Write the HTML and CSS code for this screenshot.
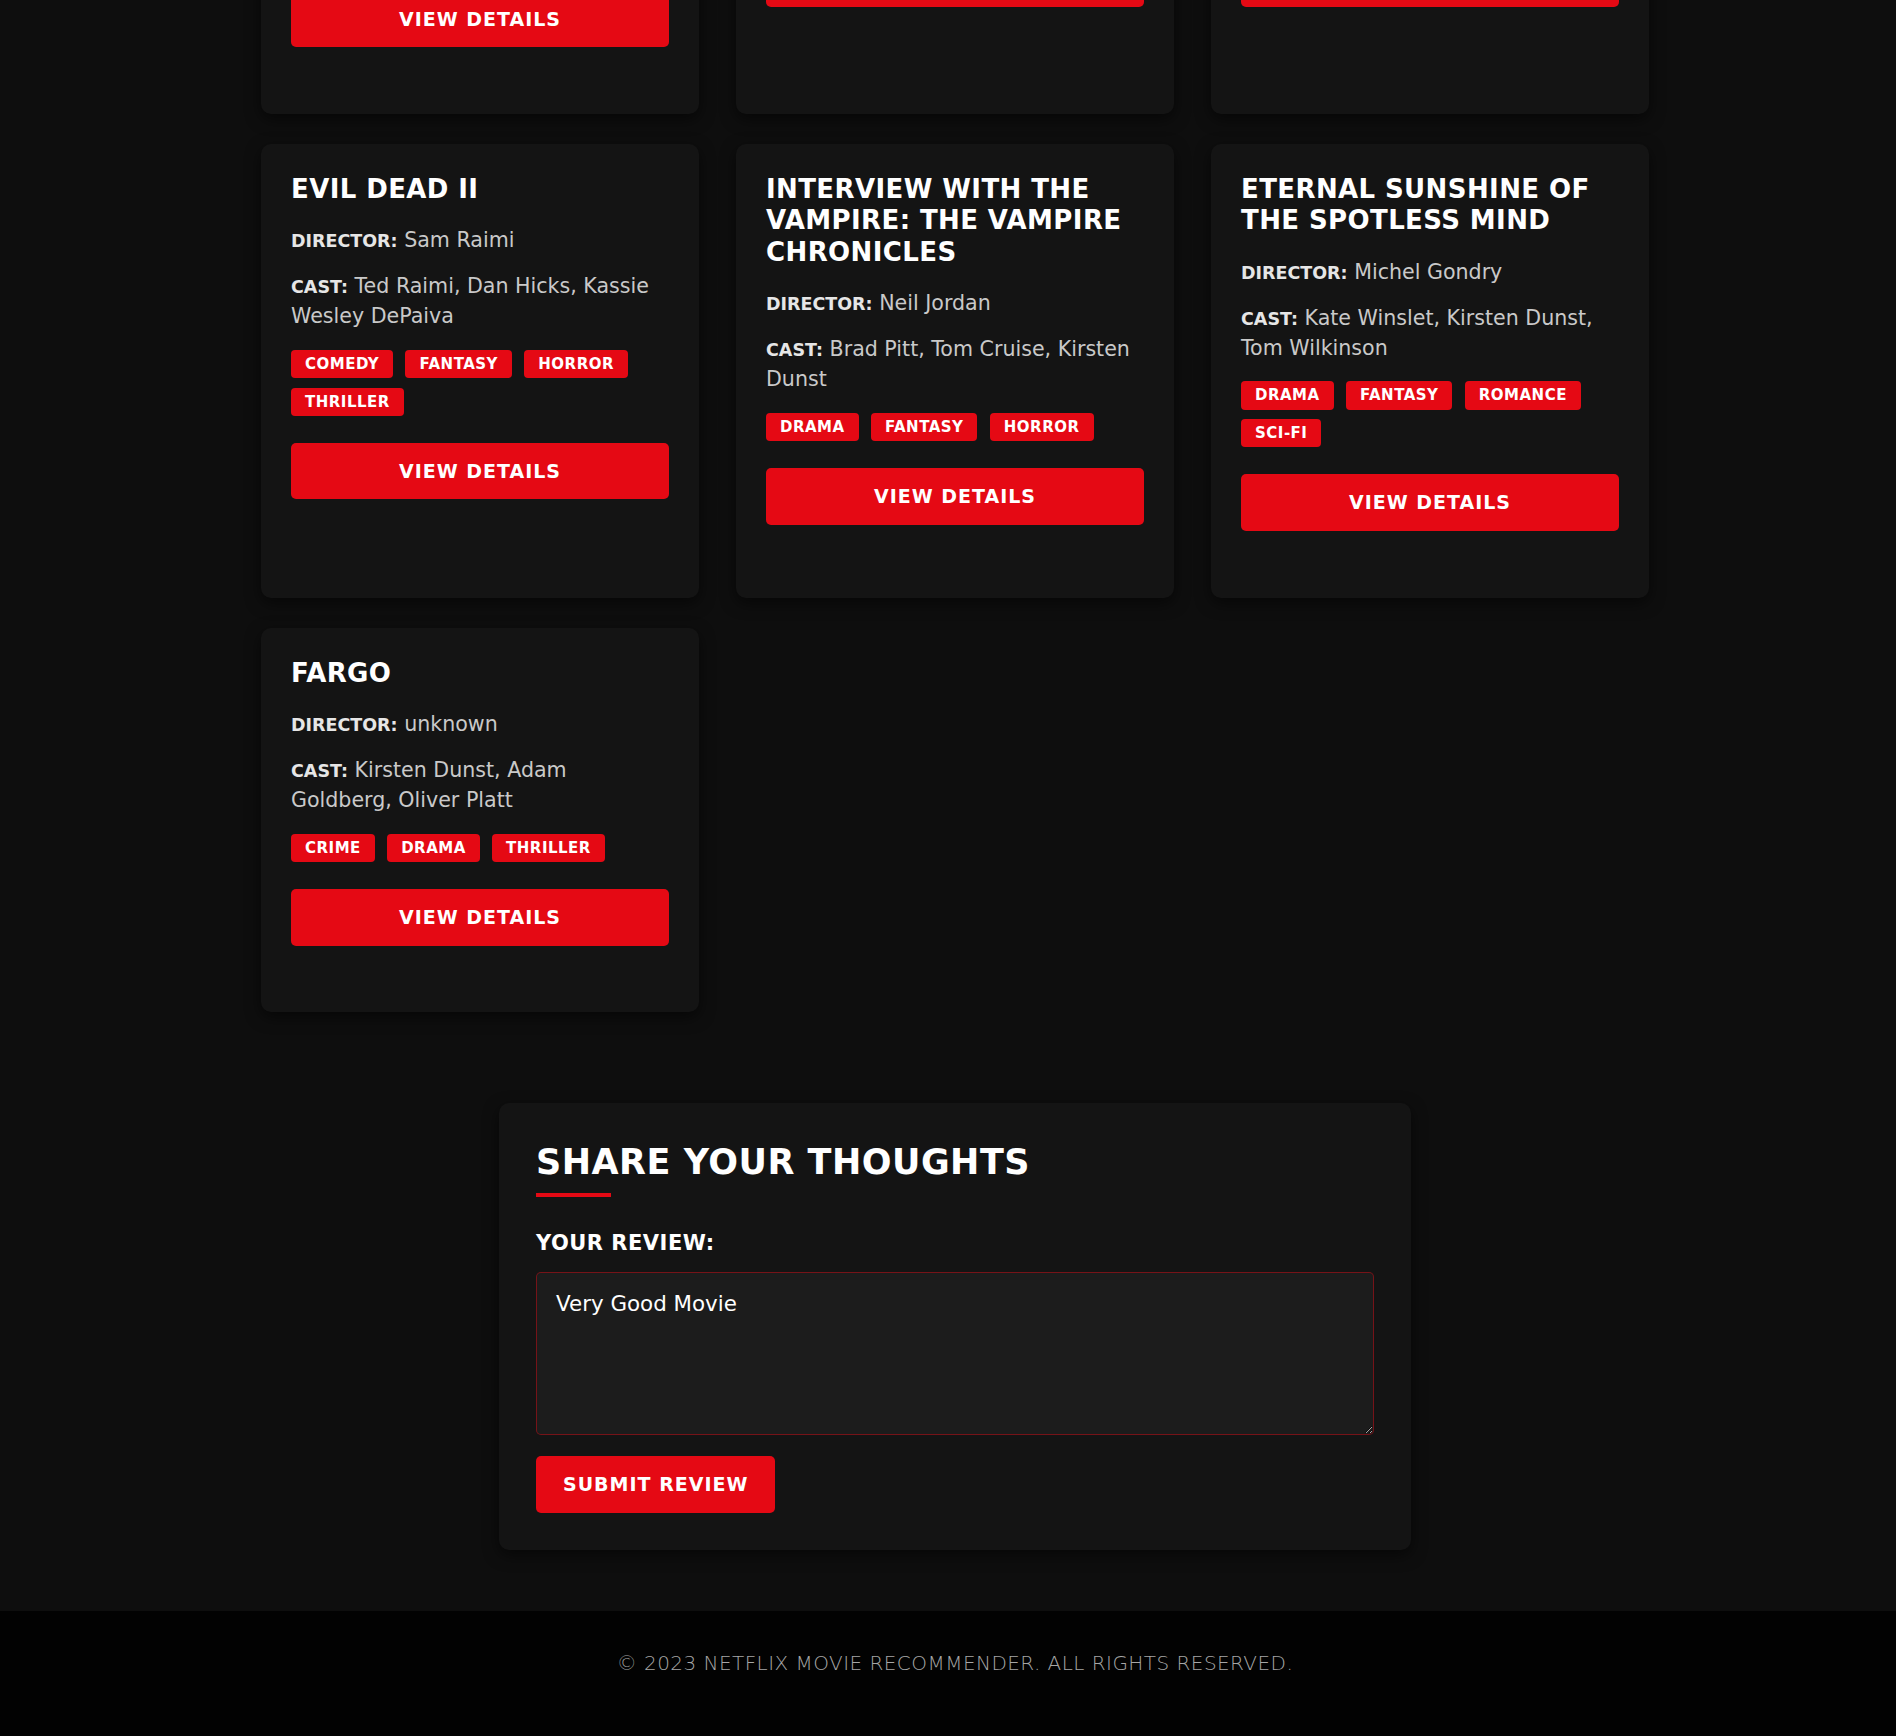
FILE: index.html
```html
<!DOCTYPE html>
<html lang="en">
<head>
<meta charset="utf-8">
<title>Netflix Movie Recommender</title>
<link rel="stylesheet" href="styles.css">
</head>
<body>
<main class="page">
  <section class="movie-grid">
    <article class="card card-cut card-cut-tall">
      <button class="details-btn" type="button">VIEW DETAILS</button>
    </article>
    <article class="card card-cut card-cut-short">
      <button class="details-btn" type="button">VIEW DETAILS</button>
    </article>
    <article class="card card-cut card-cut-short">
      <button class="details-btn" type="button">VIEW DETAILS</button>
    </article>

    <article class="card">
      <h3 class="card-title">EVIL DEAD II</h3>
      <div class="card-meta">
        <p><strong>DIRECTOR:</strong> <span class="meta-value">Sam Raimi</span></p>
        <p><strong>CAST:</strong> <span class="meta-value">Ted Raimi, Dan Hicks, Kassie Wesley DePaiva</span></p>
      </div>
      <div class="genres">
        <span class="genre">COMEDY</span>
        <span class="genre">FANTASY</span>
        <span class="genre">HORROR</span>
        <span class="genre">THRILLER</span>
      </div>
      <button class="details-btn" type="button">VIEW DETAILS</button>
    </article>

    <article class="card">
      <h3 class="card-title">INTERVIEW WITH THE VAMPIRE: THE VAMPIRE CHRONICLES</h3>
      <div class="card-meta">
        <p><strong>DIRECTOR:</strong> <span class="meta-value">Neil Jordan</span></p>
        <p><strong>CAST:</strong> <span class="meta-value">Brad Pitt, Tom Cruise, Kirsten Dunst</span></p>
      </div>
      <div class="genres">
        <span class="genre">DRAMA</span>
        <span class="genre">FANTASY</span>
        <span class="genre">HORROR</span>
      </div>
      <button class="details-btn" type="button">VIEW DETAILS</button>
    </article>

    <article class="card">
      <h3 class="card-title">ETERNAL SUNSHINE OF THE SPOTLESS MIND</h3>
      <div class="card-meta">
        <p><strong>DIRECTOR:</strong> <span class="meta-value">Michel Gondry</span></p>
        <p><strong>CAST:</strong> <span class="meta-value">Kate Winslet, Kirsten Dunst, Tom Wilkinson</span></p>
      </div>
      <div class="genres">
        <span class="genre">DRAMA</span>
        <span class="genre">FANTASY</span>
        <span class="genre">ROMANCE</span>
        <span class="genre">SCI-FI</span>
      </div>
      <button class="details-btn" type="button">VIEW DETAILS</button>
    </article>

    <article class="card">
      <h3 class="card-title">FARGO</h3>
      <div class="card-meta">
        <p><strong>DIRECTOR:</strong> <span class="meta-value">unknown</span></p>
        <p><strong>CAST:</strong> <span class="meta-value">Kirsten Dunst, Adam Goldberg, Oliver Platt</span></p>
      </div>
      <div class="genres">
        <span class="genre">CRIME</span>
        <span class="genre">DRAMA</span>
        <span class="genre">THRILLER</span>
      </div>
      <button class="details-btn" type="button">VIEW DETAILS</button>
    </article>
  </section>

  <section class="review">
    <h2 class="review-title">SHARE YOUR THOUGHTS</h2>
    <form class="review-form">
      <label class="review-label" for="review-text">YOUR REVIEW:</label>
      <textarea class="review-text" id="review-text">Very Good Movie</textarea>
      <button class="submit-btn" type="submit">SUBMIT REVIEW</button>
    </form>
  </section>
</main>

<footer class="site-footer">
  <p class="footer-text">© 2023 NETFLIX MOVIE RECOMMENDER. ALL RIGHTS RESERVED.</p>
</footer>
</body>
</html>
```

FILE: styles.css
```css
html {
  background: #0e0e0e;
}

body {
  margin: 0;
  background: #0e0e0e;
  color: #ffffff;
  font-family: "DejaVu Sans", "Liberation Sans", sans-serif;
}

.page {
  padding-left: 14px;
}

/* ---------- movie grid ---------- */
.movie-grid {
  width: 1388px;
  margin: -80px auto 0;
  display: grid;
  grid-template-columns: repeat(3, 438px);
  column-gap: 37px;
  row-gap: 30.3px;
}

.card {
  background: #141414;
  border-radius: 10px;
  padding: 30px 30px 66.8px;
  box-shadow: 0 5px 15px rgba(0, 0, 0, 0.55);
}

.card-cut-tall {
  padding-top: 70.5px;
}

.card-cut-short {
  padding-top: 30.9px;
}

.card-title {
  margin: 0 0 20px;
  font-size: 26px;
  line-height: 31.4px;
  font-weight: 700;
  letter-spacing: 0.4px;
  color: #ffffff;
}

.card-meta {
  display: flex;
  flex-direction: column;
  gap: 16px;
}

.card-meta p {
  margin: 0;
  font-size: 20.6px;
  line-height: 30px;
  color: #c9c9c9;
}

.card-meta strong {
  font-size: 17.5px;
  line-height: 1;
  font-weight: 700;
  color: #e6e6e6;
}

.meta-value {
  color: #c9c9c9;
}

.genres {
  margin-top: 18.4px;
  display: flex;
  flex-wrap: wrap;
  gap: 9.5px 12.3px;
}

.genre {
  display: inline-block;
  background: #e50914;
  color: #ffffff;
  font-size: 15px;
  font-weight: 700;
  letter-spacing: 0.5px;
  line-height: 18.3px;
  padding: 5px 14px;
  border-radius: 4px;
}

.details-btn {
  display: block;
  width: 100%;
  margin-top: 27.2px;
  padding: 16px;
  border: none;
  border-radius: 5px;
  background: #e50914;
  color: #ffffff;
  font-family: inherit;
  font-size: 19px;
  font-weight: 700;
  letter-spacing: 1px;
  line-height: 24.4px;
  cursor: pointer;
}

.card-cut .details-btn {
  margin-top: 0;
}

/* ---------- review ---------- */
.review {
  width: 912px;
  box-sizing: border-box;
  margin: 90.8px auto 0;
  padding: 37px 37px 37.3px;
  background: #141414;
  border-radius: 10px;
  box-shadow: 0 5px 15px rgba(0, 0, 0, 0.55);
}

.review-title {
  margin: 0;
  font-size: 35px;
  line-height: 45.7px;
  font-weight: 700;
  letter-spacing: 0.5px;
  color: #ffffff;
}

.review-title::after {
  content: "";
  display: block;
  width: 75px;
  height: 4px;
  margin-top: 7px;
  background: #e50914;
}

.review-form {
  display: flex;
  flex-direction: column;
  align-items: flex-start;
}

.review-label {
  margin-top: 33.4px;
  font-size: 21px;
  line-height: 26px;
  font-weight: 700;
  letter-spacing: 0.5px;
  color: #ffffff;
}

.review-text {
  display: block;
  box-sizing: border-box;
  width: 100%;
  height: 162.7px;
  margin-top: 15.9px;
  padding: 15px 19px;
  background: #1c1c1c;
  border: 1px solid rgba(229, 9, 20, 0.45);
  border-radius: 5px;
  color: #ffffff;
  font-family: inherit;
  font-size: 21.4px;
  line-height: 32px;
  outline: none;
}

.submit-btn {
  margin-top: 21px;
  padding: 16px 27px;
  border: none;
  border-radius: 5px;
  background: #e50914;
  color: #ffffff;
  font-family: inherit;
  font-size: 19px;
  font-weight: 700;
  letter-spacing: 1px;
  line-height: 24.7px;
  cursor: pointer;
}

/* ---------- footer ---------- */
.site-footer {
  margin-top: 60.7px;
  background: #020202;
  padding: 40px 0 61.3px;
}

.footer-text {
  margin: 0;
  padding-left: 14px;
  text-align: center;
  font-size: 20px;
  line-height: 24px;
  font-weight: 300;
  letter-spacing: 0.45px;
  color: #a6a6a6;
}
```
